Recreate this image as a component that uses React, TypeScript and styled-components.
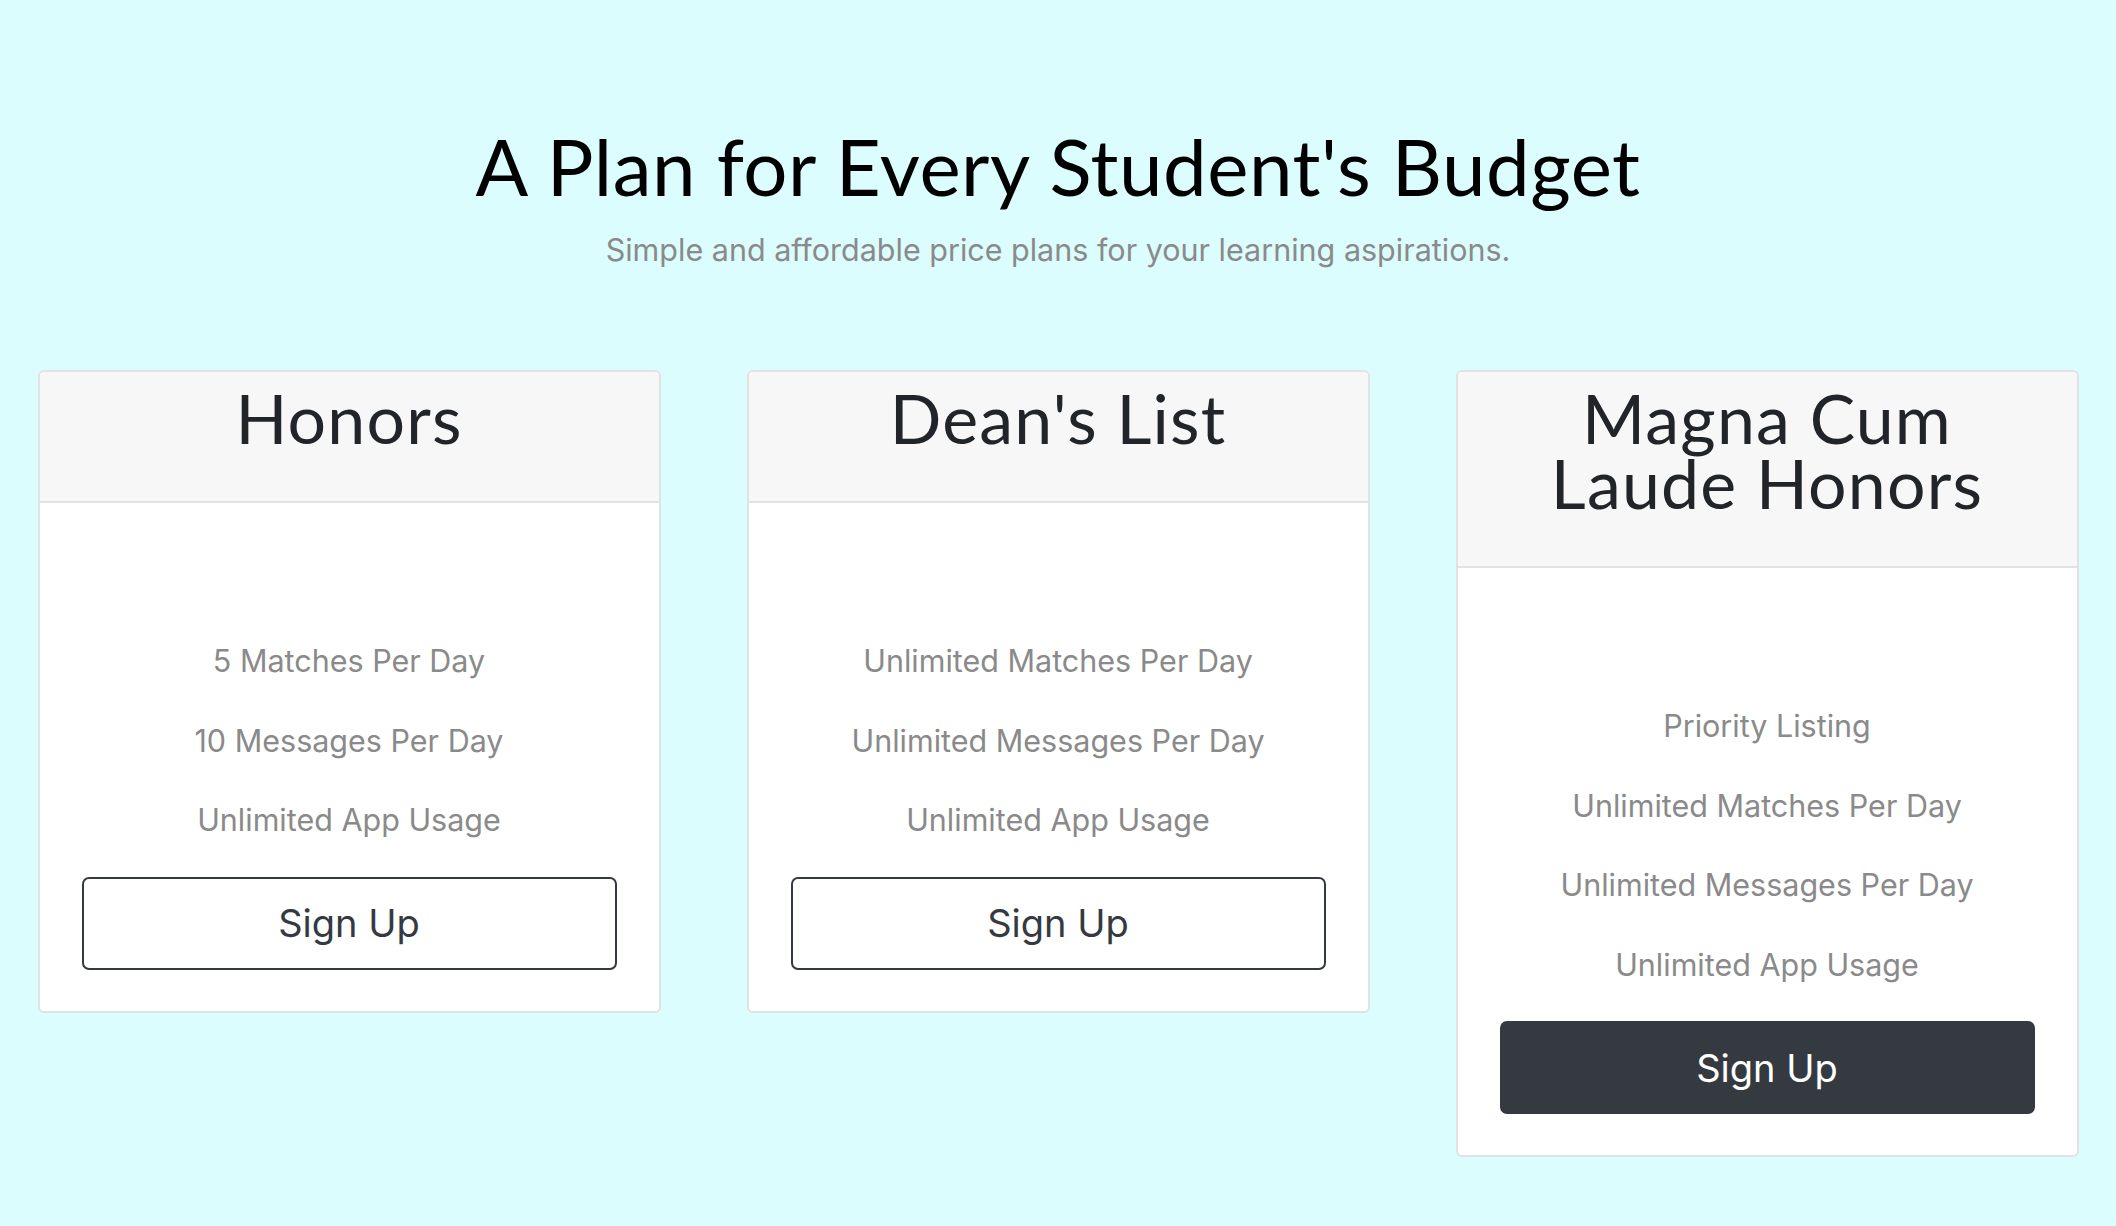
import React from "react";
import styled, { createGlobalStyle } from "styled-components";

const GlobalStyle = createGlobalStyle`
  html, body {
    margin: 0;
    padding: 0;
    background: #dbfdfd;
  }
  body {
    font-family: Inter, "Liberation Sans", sans-serif;
  }
  * { box-sizing: border-box; }
`;

const Page = styled.main`
  min-height: 1226px;
  background: #dbfdfd;
  padding-top: 118px;
  display: flex;
  flex-direction: column;
  align-items: center;
`;

const Header = styled.header`
  display: flex;
  flex-direction: column;
  align-items: center;
  text-align: center;
`;

const Title = styled.h1`
  margin: 0;
  font-family: Lato, "Noto Sans", sans-serif;
  font-weight: 400;
  font-size: 78px;
  line-height: 96px;
  letter-spacing: 0.55px;
  color: #000;
`;

const Lead = styled.p`
  margin: 16px 0 0;
  font-family: Inter, "Liberation Sans", sans-serif;
  font-size: 30.5px;
  line-height: 40px;
  font-weight: 400;
  color: #8a8a8a;
`;

const Deck = styled.section`
  margin-top: 100px;
  display: flex;
  align-items: flex-start;
  gap: 86px;
`;

const Card = styled.article`
  width: 623px;
  background: #fff;
  border: 2px solid #e2e2e2;
  border-radius: 6px;
  overflow: hidden;
  display: flex;
  flex-direction: column;
  text-align: center;
`;

const CardHeader = styled.div`
  background: #f7f7f7;
  border-bottom: 2px solid #e2e2e2;
  padding: 13px 40px 51px;
`;

const CardTitle = styled.h2`
  margin: 0;
  font-family: Lato, "Noto Sans", sans-serif;
  font-weight: 400;
  font-size: 68px;
  line-height: 65px;
  letter-spacing: 1.2px;
  color: #212529;
`;

const CardBody = styled.div`
  padding: 118px 42px 41px;
  display: flex;
  flex-direction: column;
`;

const Features = styled.ul`
  list-style: none;
  margin: 0 0 17px;
  padding: 0;
`;

const Feature = styled.li`
  font-size: 30.5px;
  line-height: 79.6px;
  color: #8a8a8a;
`;

const SignUp = styled.button<{ $solid?: boolean }>`
  height: 93px;
  width: 100%;
  border-radius: 7px;
  border: 2px solid #343a40;
  background: ${(p) => (p.$solid ? "#343a40" : "transparent")};
  color: ${(p) => (p.$solid ? "#fff" : "#343a40")};
  font-family: Inter, "Liberation Sans", sans-serif;
  font-size: 38px;
  font-weight: 400;
  cursor: pointer;
`;

type Plan = { name: string; features: string[]; solid?: boolean };

const plans: Plan[] = [
  {
    name: "Honors",
    features: ["5 Matches Per Day", "10 Messages Per Day", "Unlimited App Usage"],
  },
  {
    name: "Dean's List",
    features: ["Unlimited Matches Per Day", "Unlimited Messages Per Day", "Unlimited App Usage"],
  },
  {
    name: "Magna Cum Laude Honors",
    features: [
      "Priority Listing",
      "Unlimited Matches Per Day",
      "Unlimited Messages Per Day",
      "Unlimited App Usage",
    ],
    solid: true,
  },
];

export default function App() {
  return (
    <>
      <GlobalStyle />
      <Page>
        <Header>
          <Title>A Plan for Every Student's Budget</Title>
          <Lead>Simple and affordable price plans for your learning aspirations.</Lead>
        </Header>
        <Deck>
          {plans.map((plan) => (
            <Card key={plan.name}>
              <CardHeader>
                <CardTitle>{plan.name}</CardTitle>
              </CardHeader>
              <CardBody>
                <Features>
                  {plan.features.map((f) => (
                    <Feature key={f}>{f}</Feature>
                  ))}
                </Features>
                <SignUp $solid={plan.solid}>Sign Up</SignUp>
              </CardBody>
            </Card>
          ))}
        </Deck>
      </Page>
    </>
  );
}
